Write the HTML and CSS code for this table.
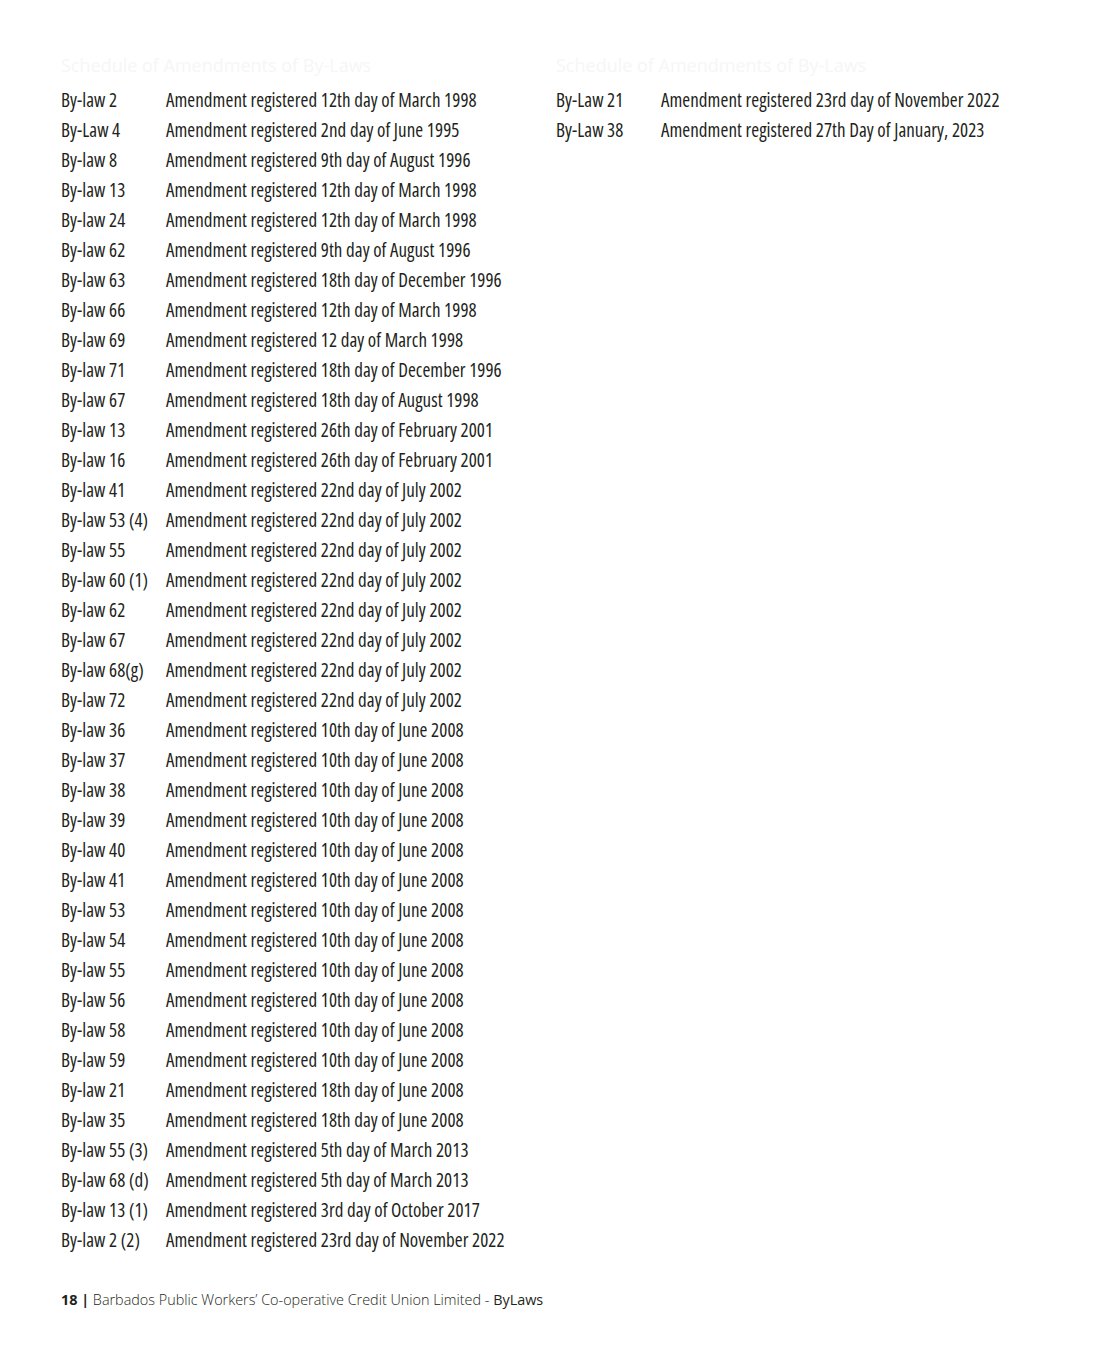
FILE: index.html
```html
<!DOCTYPE html>
<html lang="en">
<head>
  <meta charset="UTF-8">
  <title>Schedule of Amendments of By-Laws</title>
  <link rel="stylesheet" href="styles.css">
</head>
<body>

  <div class="page">
    <div class="columns">
      <!-- left column -->
      <section class="col">
        <h2>Schedule of Amendments of By-Laws</h2>
        <div class="row"><span class="law">By-law 2</span><span>Amendment registered 12th day of March 1998</span></div>
        <div class="row"><span class="law">By-Law 4</span><span>Amendment registered 2nd day of June 1995</span></div>
        <div class="row"><span class="law">By-law 8</span><span>Amendment registered 9th day of August 1996</span></div>
        <div class="row"><span class="law">By-law 13</span><span>Amendment registered 12th day of March 1998</span></div>
        <div class="row"><span class="law">By-law 24</span><span>Amendment registered 12th day of March 1998</span></div>
        <div class="row"><span class="law">By-law 62</span><span>Amendment registered 9th day of August 1996</span></div>
        <div class="row"><span class="law">By-law 63</span><span>Amendment registered 18th day of December 1996</span></div>
        <div class="row"><span class="law">By-law 66</span><span>Amendment registered 12th day of March 1998</span></div>
        <div class="row"><span class="law">By-law 69</span><span>Amendment registered 12 day of March 1998</span></div>
        <div class="row"><span class="law">By-law 71</span><span>Amendment registered 18th day of December 1996</span></div>
        <div class="row"><span class="law">By-law 67</span><span>Amendment registered 18th day of August 1998</span></div>
        <div class="row"><span class="law">By-law 13</span><span>Amendment registered 26th day of February 2001</span></div>
        <div class="row"><span class="law">By-law 16</span><span>Amendment registered 26th day of February 2001</span></div>
        <div class="row"><span class="law">By-law 41</span><span>Amendment registered 22nd day of July 2002</span></div>
        <div class="row"><span class="law">By-law 53 (4)</span><span>Amendment registered 22nd day of July 2002</span></div>
        <div class="row"><span class="law">By-law 55</span><span>Amendment registered 22nd day of July 2002</span></div>
        <div class="row"><span class="law">By-law 60 (1)</span><span>Amendment registered 22nd day of July 2002</span></div>
        <div class="row"><span class="law">By-law 62</span><span>Amendment registered 22nd day of July 2002</span></div>
        <div class="row"><span class="law">By-law 67</span><span>Amendment registered 22nd day of July 2002</span></div>
        <div class="row"><span class="law">By-law 68(g)</span><span>Amendment registered 22nd day of July 2002</span></div>
        <div class="row"><span class="law">By-law 72</span><span>Amendment registered 22nd day of July 2002</span></div>
        <div class="row"><span class="law">By-law 36</span><span>Amendment registered 10th day of June 2008</span></div>
        <div class="row"><span class="law">By-law 37</span><span>Amendment registered 10th day of June 2008</span></div>
        <div class="row"><span class="law">By-law 38</span><span>Amendment registered 10th day of June 2008</span></div>
        <div class="row"><span class="law">By-law 39</span><span>Amendment registered 10th day of June 2008</span></div>
        <div class="row"><span class="law">By-law 40</span><span>Amendment registered 10th day of June 2008</span></div>
        <div class="row"><span class="law">By-law 41</span><span>Amendment registered 10th day of June 2008</span></div>
        <div class="row"><span class="law">By-law 53</span><span>Amendment registered 10th day of June 2008</span></div>
        <div class="row"><span class="law">By-law 54</span><span>Amendment registered 10th day of June 2008</span></div>
        <div class="row"><span class="law">By-law 55</span><span>Amendment registered 10th day of June 2008</span></div>
        <div class="row"><span class="law">By-law 56</span><span>Amendment registered 10th day of June 2008</span></div>
        <div class="row"><span class="law">By-law 58</span><span>Amendment registered 10th day of June 2008</span></div>
        <div class="row"><span class="law">By-law 59</span><span>Amendment registered 10th day of June 2008</span></div>
        <div class="row"><span class="law">By-law 21</span><span>Amendment registered 18th day of June 2008</span></div>
        <div class="row"><span class="law">By-law 35</span><span>Amendment registered 18th day of June 2008</span></div>
        <div class="row"><span class="law">By-law 55 (3)</span><span>Amendment registered 5th day of March 2013</span></div>
        <div class="row"><span class="law">By-law 68 (d)</span><span>Amendment registered 5th day of March 2013</span></div>
        <div class="row"><span class="law">By-law 13 (1)</span><span>Amendment registered 3rd day of October 2017</span></div>
        <div class="row"><span class="law">By-law 2 (2)</span><span>Amendment registered 23rd day of November 2022</span></div>
      </section>

      <!-- right column -->
      <section class="col">
        <h2>Schedule of Amendments of By-Laws</h2>
        <div class="row"><span class="law">By-Law 21</span><span>Amendment registered 23rd day of November 2022</span></div>
        <div class="row"><span class="law">By-Law 38</span><span>Amendment registered 27th Day of January, 2023</span></div>
      </section>
    </div>

    <footer>
      <b>18 |</b> Barbados Public Workers’ Co-operative Credit Union Limited - <span class="doc">ByLaws</span>
    </footer>
  </div>

</body>
</html>
```

FILE: styles.css
```css
body {
  margin: 0;
  background: #ffffff;
  color: #231f20;
  font-family: 'Open Sans', 'DejaVu Sans Condensed', sans-serif;
}

.page {
  padding: 50px 0 0 61px;
}

.columns {
  display: flex;
}

.col {
  width: 495px;
}

.col h2 {
  margin: 0;
  height: 35px;
  font-weight: normal;
  font-size: 18px;
  line-height: 30px;
  color: #f6f6f6;
  white-space: nowrap;
}

.row {
  display: flex;
  font-size: 19px;
  font-stretch: 75%;
  font-weight: 380;
  letter-spacing: 0.06px;
  line-height: 30px;
  white-space: nowrap;
}

.row .law {
  width: 105px;
  flex-shrink: 0;
}

footer {
  margin-top: 30px;
  font-size: 14.4px;
  font-weight: 350;
  line-height: 30px;
  color: #231f20;
}

footer b {
  font-weight: bold;
}

footer .doc {
  font-weight: 500;
}
```
